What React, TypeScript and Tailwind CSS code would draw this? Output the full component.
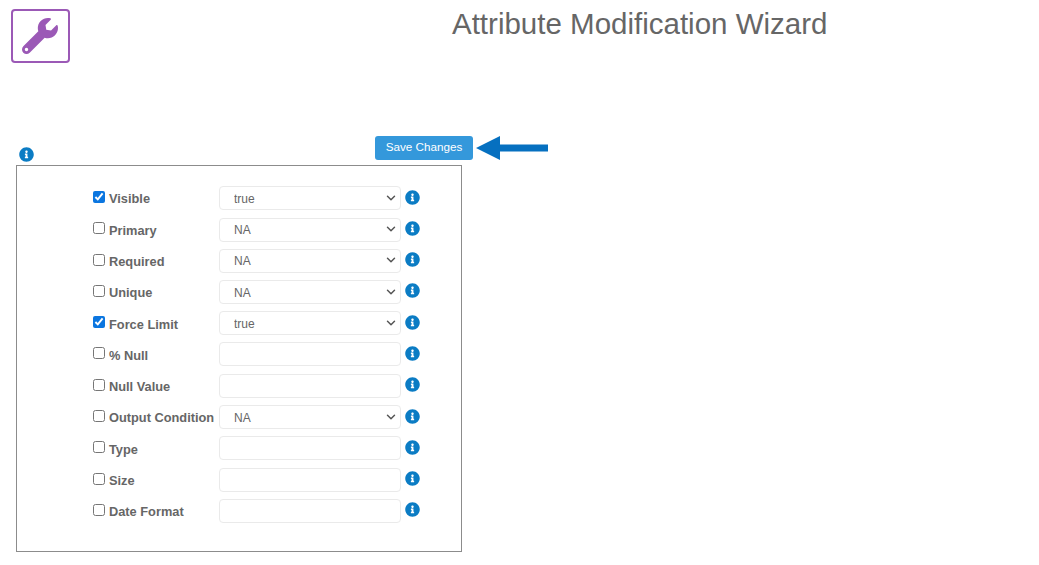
import React from 'react';
import { FaInfoCircle, FaWrench } from 'react-icons/fa';
import { ChevronDown } from 'lucide-react';

type Attribute = {
  label: string;
  checked?: boolean;
  value?: string;
};

const attributes: Attribute[] = [
  { label: 'Visible', checked: true, value: 'true' },
  { label: 'Primary', value: 'NA' },
  { label: 'Required', value: 'NA' },
  { label: 'Unique', value: 'NA' },
  { label: 'Force Limit', checked: true, value: 'true' },
  { label: '% Null' },
  { label: 'Null Value' },
  { label: 'Output Condition', value: 'NA' },
  { label: 'Type' },
  { label: 'Size' },
  { label: 'Date Format' },
];

const AttributeRow: React.FC<{ attr: Attribute }> = ({ attr }) => (
  <div className="flex h-[24px] items-center">
    <input
      type="checkbox"
      defaultChecked={attr.checked}
      className="m-0 h-[12px] w-[12px] -translate-y-[1px] accent-[#0b76e0]"
    />
    <label className="ml-[4px] w-[110px] translate-y-[0.5px] whitespace-nowrap text-[12.8px] font-bold text-[#666666]">{attr.label}</label>
    {attr.value ? (
      <div className="relative w-[182px]">
        <select
          defaultValue={attr.value}
          className="h-[24px] w-full appearance-none rounded-[4px] border border-[#eaeaea] bg-white pl-[14px] pt-[1px] text-[12px] text-[#666666]"
        >
          <option value="true">true</option>
          <option value="false">false</option>
          <option value="NA">NA</option>
        </select>
        <ChevronDown className="pointer-events-none absolute right-[3px] top-[5px] h-[14px] w-[14px] text-[#555555]" strokeWidth={2.5} />
      </div>
    ) : (
      <input type="text" className="h-[24px] w-[182px] rounded-[4px] border border-[#eaeaea] bg-white" />
    )}
    <FaInfoCircle className="ml-[4px] -translate-y-[1px] text-[15px] text-[#0b7cc4]" />
  </div>
);

export default function App() {
  return (
    <div className="h-[565px] w-[1039px] overflow-hidden bg-white font-['Liberation_Sans',Arial,sans-serif]">
      {/* Header */}
      <div className="flex h-[128px] items-start pl-[11px] pt-[8.500px]">
        <div className="flex h-[54.500px] w-[58.500px] items-center justify-center rounded-[4px] border-2 border-[#9b59b6]">
          <FaWrench className="text-[36px] text-[#9b59b6]" />
        </div>
        <h1 className="ml-[382.500px] mt-[-6.500px] whitespace-nowrap text-[29.5px] font-normal leading-[44px] text-[#666666]">
          Attribute Modification Wizard
        </h1>
      </div>

      <div className="flex h-[37px] items-start">
        <FaInfoCircle className="ml-[19px] mt-[19px] text-[15px] text-[#0b7cc4]" />
        <button className="ml-[341px] mt-[8px] h-[24px] w-[98px] rounded-[3px] bg-[#3498db] pb-[2px] text-[11.7px] text-white">
          Save Changes
        </button>
        <svg className="mt-[7px] ml-[3px]" width="73" height="26" viewBox="0 0 73 26">
          <path d="M0 13 L24 1 V9.500 H72 V16.500 H24 V25 Z" fill="#0670c0" />
        </svg>
      </div>

      {/* Attribute form */}
      <div className="ml-[16px] h-[387px] w-[446px] border border-[#8c8c8c] pl-[76px] pt-[20px]">
        <div className="flex flex-col gap-[7.3px]">
          {attributes.map((attr) => (
            <AttributeRow key={attr.label} attr={attr} />
          ))}
        </div>
      </div>
    </div>
  );
}
